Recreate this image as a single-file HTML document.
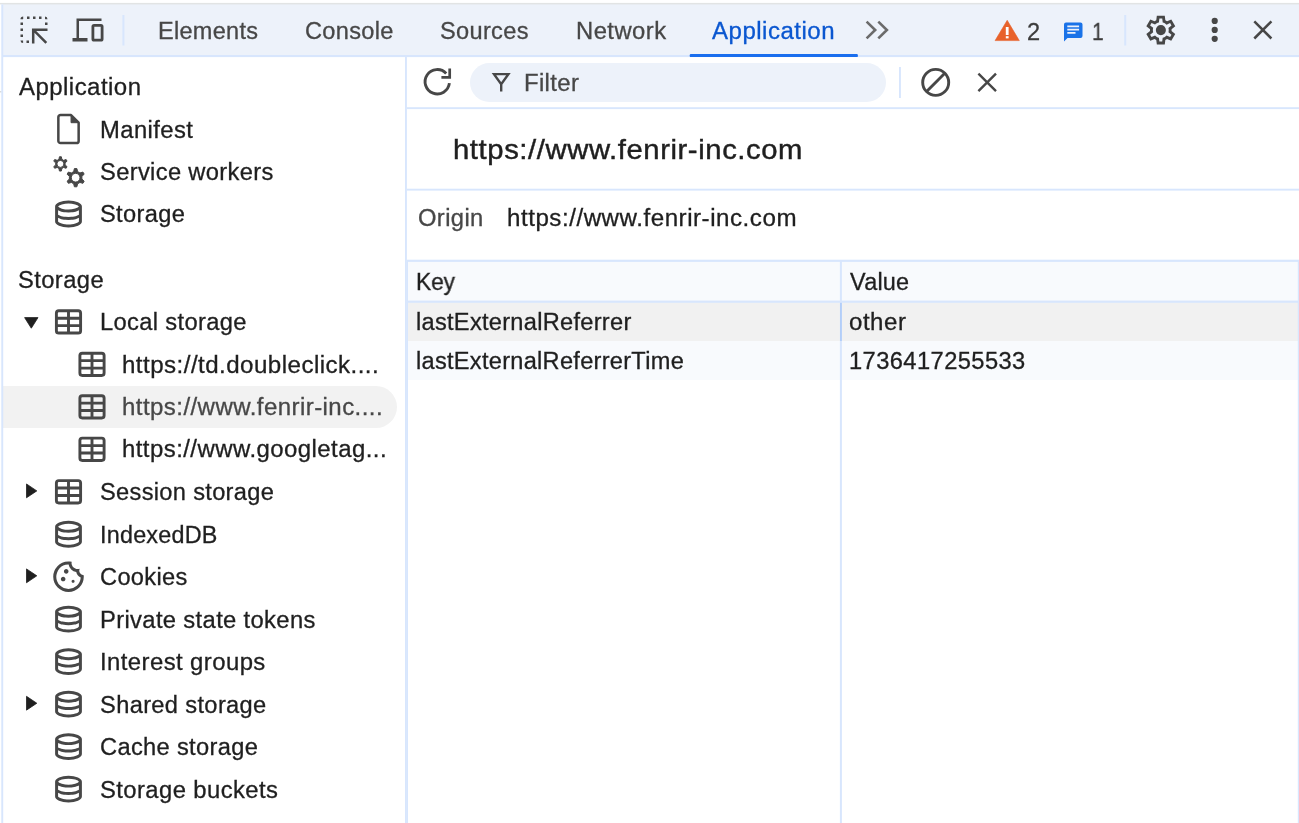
<!DOCTYPE html>
<html lang="en"><head><meta charset="utf-8"><title>DevTools - Application - Local storage</title>
<style>
html,body{margin:0;padding:0;background:#fff}
body{width:1299px;height:823px;position:relative;overflow:hidden;font-family:"Liberation Sans",Arial,sans-serif}
header,nav,aside,main,section,ul,li,table,thead,tbody,tr,th,td,h1,h2,dl,dt,dd,div{margin:0;padding:0;border:0;font-weight:normal;list-style:none;display:block;position:static}
.t{position:absolute;white-space:nowrap;line-height:1em;display:block;will-change:transform;transform-origin:0 0;-webkit-text-stroke:0.3px}
.big{-webkit-text-stroke:0.45px}
.a{position:absolute}
svg{position:absolute;overflow:visible}
</style></head><body>

<div class="bg">
<div class="a" style="left:3px;top:4px;width:1296px;height:52px;background:#edf2fa"></div>
<div class="a" style="left:3px;top:386px;width:394px;height:42px;background:#f2f2f2;border-radius:0 21px 21px 0"></div>
<div class="a" style="left:470px;top:63px;width:416px;height:39px;border-radius:19.5px;background:#edf2fa"></div>
<div class="a" style="left:407px;top:261px;width:892px;height:40px;background:#f8fafd"></div>
<div class="a" style="left:407px;top:302px;width:892px;height:39px;background:#f1f1f1"></div>
<div class="a" style="left:407px;top:341px;width:892px;height:39px;background:#f8fafd"></div>
<svg style="left:0;top:0" width="1299" height="823" viewBox="0 0 1299 823"><rect x="0" y="2.9" width="1299" height="1.5" fill="#e2e4e4"/><rect x="0" y="91.2" width="1.6" height="1.2" fill="#d0d3d3"/><rect x="1.3" y="4.3" width="1.9" height="819" fill="#d8e6fd"/><rect x="3" y="55.0" width="1296" height="2.1" fill="#d8e6fd"/><rect x="122.4" y="15" width="2" height="30.5" fill="#d8e6fd"/><rect x="1124.2" y="15" width="2" height="30.5" fill="#d8e6fd"/><rect x="405" y="57" width="1.9" height="766" fill="#d8e6fd"/><rect x="406.9" y="260" width="1.1" height="563" fill="#d8e6fd"/><rect x="406.9" y="107.2" width="893" height="1.9" fill="#d8e6fd"/><rect x="899" y="67" width="1.9" height="31" fill="#d8e6fd"/><rect x="406.9" y="188.7" width="893" height="1.9" fill="#d8e6fd"/><rect x="406.9" y="259.7" width="893" height="2.2" fill="#d8e6fd"/><rect x="406.9" y="300.6" width="893" height="2.2" fill="#d8e6fd"/><rect x="839.9" y="261" width="2.0" height="562" fill="#d8e6fd"/><rect x="840.1" y="302.8" width="1.7" height="38.2" fill="#b0cbf8"/><rect x="1297.8" y="260" width="1.2" height="563" fill="#d8e6fd"/></svg>
</div>
<header class="tabbed-pane-header">
<nav role="tablist">
<span class="t" role="tab" style="left:158.39px;top:20px;font-size:23px;letter-spacing:0.281px;color:#474747;transform:scaleX(1.0215)">Elements</span>
<span class="t" role="tab" style="left:304.99px;top:20px;font-size:23px;letter-spacing:0.326px;color:#474747;transform:scaleX(1.0244)">Console</span>
<span class="t" role="tab" style="left:439.89px;top:20px;font-size:23px;letter-spacing:0.327px;color:#474747;transform:scaleX(1.0245)">Sources</span>
<span class="t" role="tab" style="left:575.67px;top:20px;font-size:23px;letter-spacing:0.455px;color:#474747;transform:scaleX(1.0344)">Network</span>
<span class="t" role="tab" aria-selected="true" style="left:711.86px;top:20px;font-size:23px;letter-spacing:0.477px;color:#0b57d0;transform:scaleX(1.0453)">Application</span>
<svg style="left:0;top:0" width="1299" height="60" viewBox="0 0 1299 60"><rect x="689.7" y="54" width="168.2" height="3.1" rx="1.2" fill="#1a6eee"/></svg>
</nav>
<span class="t" style="left:1027.09px;top:21px;font-size:23px;letter-spacing:0.000px;color:#3c3c3c;transform:scaleX(1.0241)">2</span>
<span class="t" style="left:1091.54px;top:21px;font-size:23px;letter-spacing:0.000px;color:#3c3c3c;transform:scaleX(0.9145)">1</span>
<svg style="left:0;top:0" width="1299" height="60" viewBox="0 0 1299 60"><rect x="27" y="16.5" width="2.5" height="2.5" fill="#474747"/><rect x="33" y="16.5" width="2.5" height="2.5" fill="#474747"/><rect x="39" y="16.5" width="2.5" height="2.5" fill="#474747"/><rect x="20.5" y="22.5" width="2.5" height="2.5" fill="#474747"/><rect x="20.5" y="28.5" width="2.5" height="2.5" fill="#474747"/><rect x="20.5" y="34.5" width="2.5" height="2.5" fill="#474747"/><rect x="45" y="22.5" width="2.5" height="2.5" fill="#474747"/><rect x="26.5" y="40.5" width="2.5" height="2.5" fill="#474747"/><path d="M23.2 16.5 a2.7 2.7 0 0 0 -2.7 2.7 h2.5 v-0.2 h0.2Z M45 16.5 v2.5 h0.2 v0.2 h2.3 a2.7 2.7 0 0 0 -2.5 -2.7Z M20.5 40.5 a2.6 2.6 0 0 0 2.6 2.5 v-2.5Z" fill="#474747"/><path d="M47.5 29.7 H33.2 V43.5 M33.6 30.1 L46.3 42.8" fill="none" stroke="#474747" stroke-width="2.5"/><path d="M101.5 19.75 H77.75 V38" fill="none" stroke="#474747" stroke-width="2.5"/><rect x="72.5" y="38" width="15" height="3.5" fill="#474747"/><rect x="92.9" y="25.4" width="9.2" height="14.7" rx="1.2" fill="none" stroke="#474747" stroke-width="2.8"/><path d="M866.6 21.6 L875.2 29.95 L866.6 38.4 M878.3 21.6 L886.9 29.95 L878.3 38.4" fill="none" stroke="#6b6b6b" stroke-width="2.6" stroke-linejoin="miter"/><path d="M1007.2 20.3 L1019.3 40.6 H995.1Z" fill="#e8622a" stroke="#e8622a" stroke-width="0.6" stroke-linejoin="round"/><rect x="1005.8" y="27" width="2.8" height="8" fill="#fff"/><rect x="1005.8" y="36.2" width="2.8" height="2.2" fill="#fff"/><path d="M1066 22.5 h14.5 a2 2 0 0 1 2 2 v11.5 a2 2 0 0 1 -2 2 h-13 l-3.5 3.4 v-16.9 a2 2 0 0 1 2 -2Z" fill="#1a73e8"/><path d="M1067.3 26.3 h11.8 M1067.3 29.6 h11.8 M1067.3 32.9 h8.2" stroke="#edf2fa" stroke-width="1.7" fill="none"/><g transform="translate(1160.8 30.1) scale(0.036) translate(-480 480)"><path d="m370-80-16-128q-13-5-24.500-12T307-235l-119 50L78-375l103-78q-1-7-1-13.500v-27q0-6.500 1-13.500L78-585l110-190 119 50q11-8 23-15t24-12l16-128h220l16 128q13 5 24.500 12t22.500 15l119-50 110 190-103 78q1 7 1 13.500v27q0 6.500-2 13.500l103 78-110 190-118-50q-11 8-23 15t-24 12L590-80H370Zm70-80h79l14-106q31-8 57.500-23.500T639-327l99 41 39-68-86-65q5-14 7-29.500t2-31.500q0-16-2-31.500t-7-29.500l86-65-39-68-99 42q-22-23-48.500-38.500T533-694l-13-106h-79l-14 106q-31 8-57.500 23.500T321-633l-99-41-39 68 86 64q-5 15-7 30t-2 32q0 16 2 31t7 30l-86 65 39 68 99-42q22 23 48.500 38.500T427-266l13 106Zm42-180q58 0 99-41t41-99q0-58-41-99t-99-41q-59 0-99.500 41T342-480q0 58 40.500 99t99.500 41Zm-2-140Z" fill="#474747" /></g><circle cx="1214.7" cy="20.9" r="3.1" fill="#474747"/><circle cx="1214.7" cy="29.9" r="3.1" fill="#474747"/><circle cx="1214.7" cy="38.8" r="3.1" fill="#474747"/><path d="M1254.3 21.4 L1271.4 38.5 M1271.4 21.4 L1254.3 38.5" stroke="#474747" stroke-width="2.5" fill="none"/></svg>
</header>
<aside class="sidebar" role="tree">
<section>
<h2 class="t" style="left:18.66px;top:76px;font-size:23px;letter-spacing:0.450px;color:#1f1f1f;transform:scaleX(1.0425)">Application</h2>
<ul>
<li role="treeitem">
<svg style="left:48px;top:109px" width="40" height="40" viewBox="0 0 40 40"><g transform="translate(0.50 0.10)"><path d="M12.05 6.00 H22.55 L30.15 13.60 V31.80 a2.2 2.2 0 0 1 -2.2 2.2 H12.05 a2.2 2.2 0 0 1 -2.2 -2.2 V8.20 a2.2 2.2 0 0 1 2.2 -2.2Z" fill="none" stroke="#474747" stroke-width="2.5" stroke-linejoin="round"/><path d="M22.55 6.00 V13.60 H30.15Z" fill="#474747" stroke="#474747" stroke-width="1" stroke-linejoin="round"/></g></svg>
<span class="t" style="left:99.57px;top:119px;font-size:23px;letter-spacing:0.412px;color:#1f1f1f;transform:scaleX(1.0353)">Manifest</span>
</li>
<li role="treeitem">
<svg style="left:48px;top:151px" width="40" height="40" viewBox="0 0 40 40"><g transform="translate(0.50 0.60)"><path d="M13.35 7.72 L12.85 5.16 L10.95 5.16 L10.45 7.72 L8.66 8.76 L6.19 7.91 L5.24 9.55 L7.21 11.27 L7.21 13.33 L5.24 15.05 L6.19 16.69 L8.66 15.84 L10.45 16.88 L10.95 19.44 L12.85 19.44 L13.35 16.88 L15.14 15.84 L17.61 16.69 L18.56 15.05 L16.59 13.33 L16.59 11.27 L18.56 9.55 L17.61 7.91 L15.14 8.76Z M8.40 12.30 a3.5 3.5 0 1 0 7.0 0 a3.5 3.5 0 1 0 -7.0 0Z M29.09 20.00 L28.39 16.99 L25.89 16.99 L25.19 20.00 L22.84 21.36 L19.87 20.46 L18.62 22.63 L20.89 24.74 L20.89 27.46 L18.62 29.57 L19.87 31.74 L22.84 30.84 L25.19 32.20 L25.89 35.21 L28.39 35.21 L29.09 32.20 L31.44 30.84 L34.41 31.74 L35.66 29.57 L33.39 27.46 L33.39 24.74 L35.66 22.63 L34.41 20.46 L31.44 21.36Z M22.79 26.10 a4.35 4.35 0 1 0 8.7 0 a4.35 4.35 0 1 0 -8.7 0Z" fill="#474747" fill-rule="evenodd" stroke="#474747" stroke-width="1.0" stroke-linejoin="round"/></g></svg>
<span class="t" style="left:99.58px;top:161px;font-size:23px;letter-spacing:0.336px;color:#1f1f1f;transform:scaleX(1.0301)">Service workers</span>
</li>
<li role="treeitem">
<svg style="left:48px;top:194px" width="40" height="40" viewBox="0 0 40 40"><g transform="translate(0.50 0.00)"><g transform="translate(20 20) scale(0.0372) translate(-480 480)"><path d="M480-120q-151 0-255.500-46.500T120-280v-400q0-66 105.500-113T480-840q149 0 254.500 47T840-680v400q0 67-104.500 113.500T480-120Zm0-479q89 0 179-25.500T760-679q-11-29-100.500-55T480-760q-91 0-178.500 25.500T200-679q14 30 101.500 55T480-599Zm0 199q42 0 81-4t74.500-11.500q35.500-7.500 67-18.500t57.500-25v-120q-26 14-57.500 25t-67 18.500Q600-528 561-524t-81 4q-42 0-82-4t-75.500-11.500Q287-543 256-554t-56-25v120q25 14 56 25t66.500 18.500Q358-408 398-404t82 4Zm0 200q46 0 93.500-7t87.500-18.500q40-11.500 67-26t32-29.500v-98q-26 14-57.500 25t-67 18.500Q600-328 561-324t-81 4q-42 0-82-4t-75.500-11.500Q287-343 256-354t-56-25v99q5 15 31.500 29t66.500 25.500q40 11.500 88 18.500t94 7Z" fill="#474747" /></g></g></svg>
<span class="t" style="left:99.58px;top:203px;font-size:23px;letter-spacing:0.344px;color:#1f1f1f;transform:scaleX(1.0271)">Storage</span>
</li>
</ul></section>
<section>
<h2 class="t" style="left:18.08px;top:269px;font-size:23px;letter-spacing:0.399px;color:#1f1f1f;transform:scaleX(1.0316)">Storage</h2>
<ul>
<li role="treeitem">
<svg style="left:24px;top:316px" width="16" height="14" viewBox="0 0 16 14"><path d="M0.6 1.60 h13.4 l-6.7 10.6Z" fill="#1f1f1f" stroke="#1f1f1f" stroke-width="0.8" stroke-linejoin="round"/></svg>
<svg style="left:48px;top:301px" width="40" height="40" viewBox="0 0 40 40"><g transform="translate(0.50 0.90)"><g fill="none" stroke="#474747" stroke-width="2.9"><rect x="7.90" y="8.85" width="24.20" height="22.30" rx="2.4"/><path d="M20 8.85 V31.15 M7.90 16.28 H32.10 M7.90 23.72 H32.10"/></g></g></svg>
<span class="t" style="left:99.58px;top:311px;font-size:23px;letter-spacing:0.332px;color:#1f1f1f;transform:scaleX(1.0302)">Local storage</span>
</li>
<li role="treeitem">
<svg style="left:72px;top:344px" width="40" height="40" viewBox="0 0 40 40"><g transform="translate(0.00 0.37)"><g fill="none" stroke="#474747" stroke-width="2.9"><rect x="7.90" y="8.85" width="24.20" height="22.30" rx="2.4"/><path d="M20 8.85 V31.15 M7.90 16.28 H32.10 M7.90 23.72 H32.10"/></g></g></svg>
<span class="t" style="left:122.05px;top:354px;font-size:23px;letter-spacing:0.432px;color:#1f1f1f;transform:scaleX(1.0489)">https://td.doubleclick....</span>
</li>
<li role="treeitem">
<svg style="left:72px;top:386px" width="40" height="40" viewBox="0 0 40 40"><g transform="translate(0.00 0.84)"><g fill="none" stroke="#474747" stroke-width="2.9"><rect x="7.90" y="8.85" width="24.20" height="22.30" rx="2.4"/><path d="M20 8.85 V31.15 M7.90 16.28 H32.10 M7.90 23.72 H32.10"/></g></g></svg>
<span class="t" style="left:122.06px;top:396px;font-size:23px;letter-spacing:0.411px;color:#474747;transform:scaleX(1.0454)">https://www.fenrir-inc....</span>
</li>
<li role="treeitem">
<svg style="left:72px;top:429px" width="40" height="40" viewBox="0 0 40 40"><g transform="translate(0.00 0.31)"><g fill="none" stroke="#474747" stroke-width="2.9"><rect x="7.90" y="8.85" width="24.20" height="22.30" rx="2.4"/><path d="M20 8.85 V31.15 M7.90 16.28 H32.10 M7.90 23.72 H32.10"/></g></g></svg>
<span class="t" style="left:122.06px;top:438px;font-size:23px;letter-spacing:0.424px;color:#1f1f1f;transform:scaleX(1.0420)">https://www.googletag...</span>
</li>
<li role="treeitem">
<svg style="left:26px;top:483px" width="14" height="18" viewBox="0 0 14 18"><path d="M0.5 0.98 v13.8 l10.3 -6.9Z" fill="#1f1f1f" stroke="#1f1f1f" stroke-width="0.8" stroke-linejoin="round"/></svg>
<svg style="left:48px;top:471px" width="40" height="40" viewBox="0 0 40 40"><g transform="translate(0.50 0.78)"><g fill="none" stroke="#474747" stroke-width="2.9"><rect x="7.90" y="8.85" width="24.20" height="22.30" rx="2.4"/><path d="M20 8.85 V31.15 M7.90 16.28 H32.10 M7.90 23.72 H32.10"/></g></g></svg>
<span class="t" style="left:99.58px;top:481px;font-size:23px;letter-spacing:0.308px;color:#1f1f1f;transform:scaleX(1.0273)">Session storage</span>
</li>
<li role="treeitem">
<svg style="left:48px;top:514px" width="40" height="40" viewBox="0 0 40 40"><g transform="translate(0.50 0.25)"><g transform="translate(20 20) scale(0.0372) translate(-480 480)"><path d="M480-120q-151 0-255.500-46.500T120-280v-400q0-66 105.500-113T480-840q149 0 254.500 47T840-680v400q0 67-104.500 113.500T480-120Zm0-479q89 0 179-25.500T760-679q-11-29-100.500-55T480-760q-91 0-178.500 25.500T200-679q14 30 101.500 55T480-599Zm0 199q42 0 81-4t74.500-11.500q35.500-7.500 67-18.500t57.500-25v-120q-26 14-57.500 25t-67 18.500Q600-528 561-524t-81 4q-42 0-82-4t-75.500-11.500Q287-543 256-554t-56-25v120q25 14 56 25t66.500 18.500Q358-408 398-404t82 4Zm0 200q46 0 93.500-7t87.500-18.500q40-11.500 67-26t32-29.500v-98q-26 14-57.500 25t-67 18.500Q600-328 561-324t-81 4q-42 0-82-4t-75.500-11.500Q287-343 256-354t-56-25v99q5 15 31.500 29t66.500 25.500q40 11.500 88 18.500t94 7Z" fill="#474747" /></g></g></svg>
<span class="t" style="left:99.60px;top:524px;font-size:23px;letter-spacing:0.215px;color:#1f1f1f;transform:scaleX(1.0157)">IndexedDB</span>
</li>
<li role="treeitem">
<svg style="left:26px;top:568px" width="14" height="18" viewBox="0 0 14 18"><path d="M0.5 0.92 v13.8 l10.3 -6.9Z" fill="#1f1f1f" stroke="#1f1f1f" stroke-width="0.8" stroke-linejoin="round"/></svg>
<svg style="left:48px;top:556px" width="40" height="40" viewBox="0 0 40 40"><g transform="translate(0.50 0.72)"><g transform="translate(20 20) scale(0.0382) translate(-480 480)"><path d="M480-80q-83 0-156-31.500T197-197q-54-54-85.500-127T80-480q0-75 29-147t81-128.500q52-56.500 125-91T475-881q21 0 43 2t45 7q-9 45 6 85t45 66.500q30 26.500 71.500 36.500t85.500-5q-26 59 7.500 113t99.500 56q1 11 1.500 20.500t.5 20.500q0 82-31.500 154.500t-85.500 127q-54 54.500-127 86T480-80Zm-60-480q25 0 42.500-17.500T480-620q0-25-17.500-42.500T420-680q-25 0-42.500 17.500T360-620q0 25 17.500 42.500T420-560Zm-80 200q25 0 42.500-17.500T400-420q0-25-17.500-42.500T340-480q-25 0-42.500 17.500T280-420q0 25 17.500 42.500T340-360Zm260 40q17 0 28.500-11.500T640-360q0-17-11.500-28.500T600-400q-17 0-28.500 11.500T560-360q0 17 11.500 28.500T600-320ZM480-160q122 0 216.500-84T800-458q-50-22-78.500-60T683-603q-77-11-132-66t-68-132q-80-2-140.500 29t-101 79.500Q201-644 180.500-587T160-480q0 133 93.500 226.500T480-160Zm0-324Z" fill="#474747" /></g></g></svg>
<span class="t" style="left:99.58px;top:566px;font-size:23px;letter-spacing:0.342px;color:#1f1f1f;transform:scaleX(1.0260)">Cookies</span>
</li>
<li role="treeitem">
<svg style="left:48px;top:599px" width="40" height="40" viewBox="0 0 40 40"><g transform="translate(0.50 0.19)"><g transform="translate(20 20) scale(0.0372) translate(-480 480)"><path d="M480-120q-151 0-255.500-46.500T120-280v-400q0-66 105.500-113T480-840q149 0 254.500 47T840-680v400q0 67-104.500 113.500T480-120Zm0-479q89 0 179-25.500T760-679q-11-29-100.500-55T480-760q-91 0-178.500 25.500T200-679q14 30 101.500 55T480-599Zm0 199q42 0 81-4t74.500-11.500q35.500-7.500 67-18.500t57.500-25v-120q-26 14-57.500 25t-67 18.500Q600-528 561-524t-81 4q-42 0-82-4t-75.500-11.500Q287-543 256-554t-56-25v120q25 14 56 25t66.500 18.500Q358-408 398-404t82 4Zm0 200q46 0 93.500-7t87.500-18.500q40-11.500 67-26t32-29.500v-98q-26 14-57.500 25t-67 18.500Q600-328 561-324t-81 4q-42 0-82-4t-75.500-11.500Q287-343 256-354t-56-25v99q5 15 31.500 29t66.500 25.500q40 11.500 88 18.500t94 7Z" fill="#474747" /></g></g></svg>
<span class="t" style="left:99.57px;top:609px;font-size:23px;letter-spacing:0.339px;color:#1f1f1f;transform:scaleX(1.0333)">Private state tokens</span>
</li>
<li role="treeitem">
<svg style="left:48px;top:641px" width="40" height="40" viewBox="0 0 40 40"><g transform="translate(0.50 0.66)"><g transform="translate(20 20) scale(0.0372) translate(-480 480)"><path d="M480-120q-151 0-255.500-46.500T120-280v-400q0-66 105.500-113T480-840q149 0 254.500 47T840-680v400q0 67-104.500 113.500T480-120Zm0-479q89 0 179-25.500T760-679q-11-29-100.500-55T480-760q-91 0-178.500 25.500T200-679q14 30 101.500 55T480-599Zm0 199q42 0 81-4t74.500-11.500q35.500-7.500 67-18.500t57.500-25v-120q-26 14-57.500 25t-67 18.500Q600-528 561-524t-81 4q-42 0-82-4t-75.500-11.500Q287-543 256-554t-56-25v120q25 14 56 25t66.500 18.500Q358-408 398-404t82 4Zm0 200q46 0 93.500-7t87.500-18.500q40-11.500 67-26t32-29.500v-98q-26 14-57.500 25t-67 18.500Q600-328 561-324t-81 4q-42 0-82-4t-75.500-11.500Q287-343 256-354t-56-25v99q5 15 31.500 29t66.500 25.500q40 11.500 88 18.500t94 7Z" fill="#474747" /></g></g></svg>
<span class="t" style="left:99.57px;top:651px;font-size:23px;letter-spacing:0.405px;color:#1f1f1f;transform:scaleX(1.0390)">Interest groups</span>
</li>
<li role="treeitem">
<svg style="left:26px;top:695px" width="14" height="18" viewBox="0 0 14 18"><path d="M0.5 1.33 v13.8 l10.3 -6.9Z" fill="#1f1f1f" stroke="#1f1f1f" stroke-width="0.8" stroke-linejoin="round"/></svg>
<svg style="left:48px;top:684px" width="40" height="40" viewBox="0 0 40 40"><g transform="translate(0.50 0.13)"><g transform="translate(20 20) scale(0.0372) translate(-480 480)"><path d="M480-120q-151 0-255.500-46.500T120-280v-400q0-66 105.500-113T480-840q149 0 254.500 47T840-680v400q0 67-104.500 113.500T480-120Zm0-479q89 0 179-25.500T760-679q-11-29-100.500-55T480-760q-91 0-178.500 25.500T200-679q14 30 101.500 55T480-599Zm0 199q42 0 81-4t74.500-11.500q35.500-7.500 67-18.500t57.500-25v-120q-26 14-57.500 25t-67 18.500Q600-528 561-524t-81 4q-42 0-82-4t-75.500-11.500Q287-543 256-554t-56-25v120q25 14 56 25t66.500 18.500Q358-408 398-404t82 4Zm0 200q46 0 93.500-7t87.500-18.500q40-11.500 67-26t32-29.500v-98q-26 14-57.500 25t-67 18.500Q600-328 561-324t-81 4q-42 0-82-4t-75.500-11.500Q287-343 256-354t-56-25v99q5 15 31.500 29t66.500 25.500q40 11.500 88 18.500t94 7Z" fill="#474747" /></g></g></svg>
<span class="t" style="left:99.58px;top:694px;font-size:23px;letter-spacing:0.334px;color:#1f1f1f;transform:scaleX(1.0288)">Shared storage</span>
</li>
<li role="treeitem">
<svg style="left:48px;top:726px" width="40" height="40" viewBox="0 0 40 40"><g transform="translate(0.50 0.60)"><g transform="translate(20 20) scale(0.0372) translate(-480 480)"><path d="M480-120q-151 0-255.500-46.500T120-280v-400q0-66 105.500-113T480-840q149 0 254.500 47T840-680v400q0 67-104.500 113.500T480-120Zm0-479q89 0 179-25.500T760-679q-11-29-100.500-55T480-760q-91 0-178.500 25.500T200-679q14 30 101.500 55T480-599Zm0 199q42 0 81-4t74.500-11.500q35.500-7.500 67-18.500t57.500-25v-120q-26 14-57.500 25t-67 18.500Q600-528 561-524t-81 4q-42 0-82-4t-75.500-11.500Q287-543 256-554t-56-25v120q25 14 56 25t66.500 18.500Q358-408 398-404t82 4Zm0 200q46 0 93.500-7t87.500-18.500q40-11.500 67-26t32-29.500v-98q-26 14-57.500 25t-67 18.500Q600-328 561-324t-81 4q-42 0-82-4t-75.500-11.500Q287-343 256-354t-56-25v99q5 15 31.500 29t66.500 25.500q40 11.500 88 18.500t94 7Z" fill="#474747" /></g></g></svg>
<span class="t" style="left:99.58px;top:736px;font-size:23px;letter-spacing:0.333px;color:#1f1f1f;transform:scaleX(1.0279)">Cache storage</span>
</li>
<li role="treeitem">
<svg style="left:48px;top:769px" width="40" height="40" viewBox="0 0 40 40"><g transform="translate(0.50 0.07)"><g transform="translate(20 20) scale(0.0372) translate(-480 480)"><path d="M480-120q-151 0-255.500-46.500T120-280v-400q0-66 105.500-113T480-840q149 0 254.500 47T840-680v400q0 67-104.500 113.500T480-120Zm0-479q89 0 179-25.500T760-679q-11-29-100.500-55T480-760q-91 0-178.500 25.500T200-679q14 30 101.500 55T480-599Zm0 199q42 0 81-4t74.500-11.500q35.500-7.500 67-18.500t57.500-25v-120q-26 14-57.500 25t-67 18.500Q600-528 561-524t-81 4q-42 0-82-4t-75.500-11.500Q287-543 256-554t-56-25v120q25 14 56 25t66.500 18.500Q358-408 398-404t82 4Zm0 200q46 0 93.500-7t87.500-18.500q40-11.500 67-26t32-29.500v-98q-26 14-57.500 25t-67 18.500Q600-328 561-324t-81 4q-42 0-82-4t-75.500-11.500Q287-343 256-354t-56-25v99q5 15 31.500 29t66.500 25.500q40 11.500 88 18.500t94 7Z" fill="#474747" /></g></g></svg>
<span class="t" style="left:99.57px;top:779px;font-size:23px;letter-spacing:0.400px;color:#1f1f1f;transform:scaleX(1.0354)">Storage buckets</span>
</li>
</ul></section>
</aside>
<main class="storage-view">
<div class="toolbar">
<svg style="left:0;top:0" width="1299" height="120" viewBox="0 0 1299 120"><path d="M449.4 83.2 A12.2 12.2 0 1 1 446.2 73.4" fill="none" stroke="#474747" stroke-width="2.9"/><path d="M449.7 68.6 V77.3 H441.4" fill="none" stroke="#474747" stroke-width="2.7"/><path d="M494 74.1 H508.4 L501.2 84.2Z M501.2 83.5 V91.6" fill="none" stroke="#474747" stroke-width="2.4" stroke-linejoin="miter"/><circle cx="935.7" cy="82.4" r="13" fill="none" stroke="#474747" stroke-width="2.9"/><path d="M926.6 91.5 L944.8 73.3" stroke="#474747" stroke-width="2.9"/><path d="M978.4 73.6 L996 91.2 M996 73.6 L978.4 91.2" stroke="#474747" stroke-width="2.4" fill="none"/></svg>
<span class="t" style="left:523.57px;top:72px;font-size:23px;letter-spacing:0.356px;color:#474747;transform:scaleX(1.0378)">Filter</span>
</div>
<h1 class="t big" style="left:452.74px;top:136px;font-size:28px;letter-spacing:0.552px;color:#1f1f1f;transform:scaleX(1.0454)">https://www.fenrir-inc.com</h1>
<dl>
<dt class="t" style="left:417.98px;top:207px;font-size:23px;letter-spacing:0.373px;color:#474747;transform:scaleX(1.0326)">Origin</dt>
<dd class="t" style="left:506.65px;top:207px;font-size:23px;letter-spacing:0.497px;color:#1f1f1f;transform:scaleX(1.0500)">https://www.fenrir-inc.com</dd>
</dl>
<table><thead><tr>
<th class="t" style="left:415.73px;top:271px;font-size:23px;letter-spacing:-0.160px;color:#1f1f1f;transform:scaleX(0.9915)">Key</th>
<th class="t" style="left:849.50px;top:271px;font-size:23px;letter-spacing:0.243px;color:#1f1f1f;transform:scaleX(1.0181)">Value</th>
</tr></thead><tbody><tr>
<td class="t" style="left:415.68px;top:311px;font-size:23px;letter-spacing:0.274px;color:#1f1f1f;transform:scaleX(1.0264)">lastExternalReferrer</td>
<td class="t" style="left:849.46px;top:311px;font-size:23px;letter-spacing:0.524px;color:#1f1f1f;transform:scaleX(1.0436)">other</td>
</tr><tr>
<td class="t" style="left:415.68px;top:350px;font-size:23px;letter-spacing:0.274px;color:#1f1f1f;transform:scaleX(1.0256)">lastExternalReferrerTime</td>
<td class="t" style="left:849.48px;top:350px;font-size:23px;letter-spacing:0.401px;color:#1f1f1f;transform:scaleX(1.0302)">1736417255533</td>
</tr></tbody></table>
</main>
</body></html>
